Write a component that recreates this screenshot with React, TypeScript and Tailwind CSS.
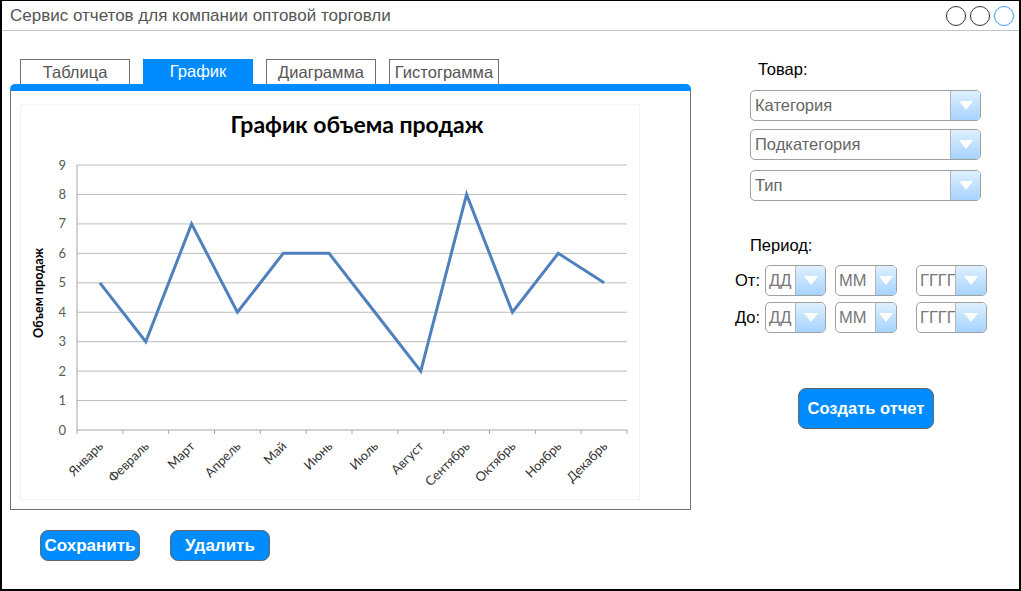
import React from 'react'

const months = [
  'Январь',
  'Февраль',
  'Март',
  'Апрель',
  'Май',
  'Июнь',
  'Июль',
  'Август',
  'Сентябрь',
  'Октябрь',
  'Ноябрь',
  'Декабрь',
]
const values = [5, 3, 7, 4, 6, 6, 4, 2, 8, 4, 6, 5]

const AX_LEFT = 57
const AX_RIGHT = 607
const AX_BOTTOM = 326
const STEP_Y = 29.44
const STEP_X = (AX_RIGHT - AX_LEFT) / 12
const CHART_FONT = "Lato, 'Open Sans', sans-serif"

function Arrow({ width }: { width: string }) {
  return (
    <div
      className={`${width} h-full flex items-center justify-center border-l border-[#b5b5b5] bg-gradient-to-b from-[#def0ff] to-[#a6d3ff]`}
    >
      <svg width="14" height="9" viewBox="0 0 14 9">
        <path d="M0 0 L14 0 L7 9 Z" fill="#ffffff" />
      </svg>
    </div>
  )
}

function Select({ label }: { label: string }) {
  return (
    <div className="w-[231px] h-[31px] flex items-stretch border border-[#a0a0a0] rounded-[5px] overflow-hidden bg-white">
      <span className="flex-1 flex items-center pl-1 text-[16.5px] text-[#666]">{label}</span>
      <Arrow width="w-[30px]" />
    </div>
  )
}

function SmallSelect({ label, w, arrow }: { label: string; w: string; arrow: string }) {
  return (
    <div className={`${w} h-[31px] flex items-stretch border border-[#a0a0a0] rounded-[5px] overflow-hidden bg-white`}>
      <span className="flex-1 flex items-center pl-[3px] text-[16.5px] text-[#777] overflow-hidden whitespace-nowrap">
        {label}
      </span>
      <Arrow width={arrow} />
    </div>
  )
}

function DateRow({ label }: { label: string }) {
  return (
    <div className="flex items-center">
      <span className="w-[32px] pl-[2px] text-[16.5px] text-black">{label}</span>
      <div className="flex">
        <SmallSelect label="ДД" w="w-[61px]" arrow="w-[30px]" />
        <div className="ml-[9px]">
          <SmallSelect label="ММ" w="w-[62px]" arrow="w-[21px]" />
        </div>
        <div className="ml-[19px]">
          <SmallSelect label="ГГГГ" w="w-[71px]" arrow="w-[31px]" />
        </div>
      </div>
    </div>
  )
}

function Chart() {
  const pts = values.map((v, i) => `${AX_LEFT + STEP_X * (i + 0.5)},${AX_BOTTOM - v * STEP_Y}`).join(' ')
  return (
    <svg width="620" height="396" viewBox="0 0 620 396" className="block">
      <rect x="0.5" y="0.5" width="619" height="395" fill="#ffffff" stroke="#f4f4f4" />
      <text x="337" y="29" textAnchor="middle" fontFamily={CHART_FONT} fontWeight="700" fontSize="23" fill="#000">
        График объема продаж
      </text>
      {Array.from({ length: 10 }).map((_, v) => {
        const y = AX_BOTTOM - v * STEP_Y
        return (
          <g key={v}>
            {v > 0 && <line x1={AX_LEFT} x2={AX_RIGHT} y1={y} y2={y} stroke="#bdbdbd" strokeWidth="1" />}
            <text x="46" y={y + 4.5} textAnchor="end" fontFamily={CHART_FONT} fontSize="13" fill="#595959">
              {v}
            </text>
          </g>
        )
      })}
      <line x1={AX_LEFT} x2={AX_RIGHT} y1={AX_BOTTOM} y2={AX_BOTTOM} stroke="#a6a6a6" />
      <line x1={AX_LEFT} x2={AX_LEFT} y1={AX_BOTTOM - 9 * STEP_Y} y2={AX_BOTTOM} stroke="#a6a6a6" />
      {Array.from({ length: 13 }).map((_, i) => (
        <line
          key={i}
          x1={AX_LEFT + STEP_X * i}
          x2={AX_LEFT + STEP_X * i}
          y1={AX_BOTTOM}
          y2={AX_BOTTOM + 4}
          stroke="#a6a6a6"
        />
      ))}
      {months.map((m, i) => (
        <text
          key={m}
          transform={`translate(${AX_LEFT + STEP_X * (i + 0.5) + 4}, ${AX_BOTTOM + 17}) rotate(-45)`}
          textAnchor="end"
          fontFamily={CHART_FONT}
          fontSize="13"
          fill="#333"
        >
          {m}
        </text>
      ))}
      <text
        transform="translate(23, 189) rotate(-90)"
        textAnchor="middle"
        fontFamily={CHART_FONT}
        fontWeight="700"
        fontSize="13"
        textLength="90"
        lengthAdjust="spacingAndGlyphs"
        fill="#000"
      >
        Объем продаж
      </text>
      <polyline points={pts} fill="none" stroke="#4f81bd" strokeWidth="3" strokeLinejoin="miter" />
    </svg>
  )
}

const tabs = ['Таблица', 'График', 'Диаграмма', 'Гистограмма']

export default function App() {
  return (
    <div
      className="w-[1021px] h-[591px] bg-white border-2 border-t border-black flex flex-col"
      style={{ fontFamily: "'Liberation Sans', Arial, sans-serif" }}
    >
      {/* title bar */}
      <div className="h-[30px] shrink-0 flex items-center justify-between border-b border-[#c4c4c4] pl-2 pr-[5px]">
        <span className="text-[17px] text-[#555]">Сервис отчетов для компании оптовой торговли</span>
        <div className="flex gap-1">
          <span className="w-5 h-5 rounded-full border border-[#333]" />
          <span className="w-5 h-5 rounded-full border border-[#333]" />
          <span className="w-5 h-5 rounded-full border border-[#3aa0ff]" />
        </div>
      </div>

      <div className="flex flex-1">
        {/* left column */}
        <div className="pl-2 pt-[28px]">
          <div className="flex gap-[13px] pl-[10px] h-[25px]">
            {tabs.map(t =>
              t === 'График' ? (
                <div key={t} className="w-[110px] flex items-center justify-center bg-[#008cff] text-white text-[16.5px]">
                  {t}
                </div>
              ) : (
                <div
                  key={t}
                  className="w-[110px] flex items-center justify-center border border-b-0 border-[#707070] text-[#555] text-[16.5px]"
                >
                  {t}
                </div>
              ),
            )}
          </div>
          <div className="w-[681px]">
            <div className="h-[7px] bg-[#008cff] rounded-t-[5px]" />
            <div className="h-[419px] border border-t-0 border-[#707070] pl-[9px] pt-[13px]">
              <Chart />
            </div>
          </div>
          <div className="flex gap-[30px] pl-[30px] mt-[20px]">
            <button className="w-[100px] h-[31px] rounded-lg border border-[#666] bg-[#008cff] text-white font-bold text-[17px]">
              Сохранить
            </button>
            <button className="w-[100px] h-[31px] rounded-lg border border-[#666] bg-[#008cff] text-white font-bold text-[17px]">
              Удалить
            </button>
          </div>
        </div>

        {/* right column */}
        <div className="flex flex-col pl-[42px] pt-[28px]">
          <span className="pl-[25px] text-[16.5px] text-black leading-[20px]">Товар:</span>
          <div className="flex flex-col pl-[17px] mt-[11px]">
            <Select label="Категория" />
            <div className="mt-[8px]">
              <Select label="Подкатегория" />
            </div>
            <div className="mt-[10px]">
              <Select label="Тип" />
            </div>
          </div>
          <span className="pl-[17px] mt-[34px] text-[16.5px] text-black leading-[20px]">Период:</span>
          <div className="flex flex-col gap-[6px] mt-[10px]">
            <DateRow label="От:" />
            <DateRow label="До:" />
          </div>
          <div className="pl-[65px] mt-[55px]">
            <button className="w-[136px] h-[41px] rounded-lg border border-[#666] bg-[#008cff] text-white font-bold text-[16.5px]">
              Создать отчет
            </button>
          </div>
        </div>
      </div>
    </div>
  )
}
